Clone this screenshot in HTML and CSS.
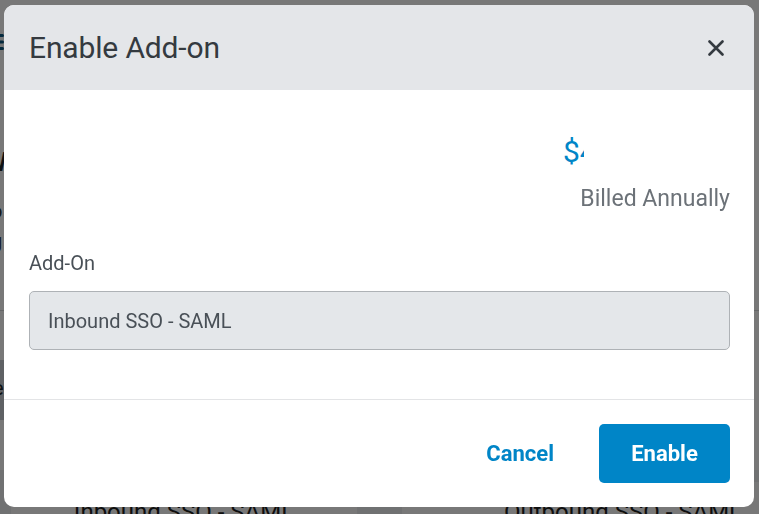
FILE: index.html
```html
<!DOCTYPE html>
<html lang="en">
<head>
<meta charset="utf-8">
<title>Enable Add-on</title>
<link rel="stylesheet" href="styles.css">
</head>
<body>
<div class="page">
  <header class="topbar">
    <svg class="menu-icon" width="22" height="18" viewBox="0 0 22 18" aria-hidden="true">
      <rect x="0" y="1" width="22" height="3" rx="1.5"/>
      <rect x="0" y="7.5" width="22" height="3" rx="1.5"/>
      <rect x="0" y="14" width="22" height="3" rx="1.5"/>
    </svg>
  </header>
  <section class="panel">
    <h1 class="page-title">W</h1>
    <p class="page-text">o</p>
    <p class="page-text">g</p>
    <hr class="page-rule">
    <div class="table-head">e</div>
  </section>
  <section class="cards">
    <div class="card">Inbound SSO - SAML</div>
    <div class="card">Outbound SSO - SAML</div>
  </section>
</div>

<div class="backdrop">
  <div class="modal" role="dialog" aria-labelledby="modal-title">
    <div class="modal-header">
      <h2 class="modal-title" id="modal-title">Enable Add-on</h2>
      <button class="close-btn" type="button" aria-label="Close">
        <svg width="16" height="16" viewBox="0 0 16 16" aria-hidden="true">
          <path d="M1.5 1.5 L14.5 14.5 M14.5 1.5 L1.5 14.5" />
        </svg>
      </button>
    </div>
    <div class="modal-body">
      <div class="price-row"><span class="price">$49.00</span></div>
      <div class="billing">Billed Annually</div>
      <label class="field-label">Add-On</label>
      <div class="field">Inbound SSO - SAML</div>
    </div>
    <div class="modal-footer">
      <button class="btn-link" type="button">Cancel</button>
      <button class="btn-primary" type="button">Enable</button>
    </div>
  </div>
</div>
</body>
</html>
```

FILE: styles.css
```css
* {
  box-sizing: border-box;
}

html, body {
  margin: 0;
  padding: 0;
}

body {
  font-family: Roboto, "Noto Sans", "Liberation Sans", sans-serif;
  background: #eef0f3;
  color: #212529;
  overflow: hidden;
  height: 514px;
}

/* ---------- page behind the dialog ---------- */
.page {
  display: flex;
  flex-direction: column;
}

.topbar {
  height: 80px;
  background: #ffffff;
  padding: 33px 0 0 0;
  margin-left: -18px;
}

.menu-icon {
  display: block;
  fill: #0b5a86;
}

.panel {
  background: #ffffff;
  padding: 67px 0 0 0;
  height: 390px;
}

.page-title {
  margin: 0 0 0 -16px;
  font-size: 26px;
  font-weight: 500;
  line-height: 30px;
}

.page-text {
  margin: 22px 0 0 -9px;
  font-size: 20px;
  line-height: 24px;
  color: #333;
}

.page-text + .page-text {
  margin-top: 6px;
}

.page-rule {
  margin: 57px 0 0 0;
  border: 0;
  border-top: 1px solid #d6d9dc;
}

.table-head {
  margin-top: 49px;
  height: 60px;
  background: #c9ced4;
  font-size: 20px;
  line-height: 56px;
  padding-left: 0;
  margin-left: -7px;
  width: 12px;
}

.cards {
  display: grid;
  grid-template-columns: 346px 442px;
  gap: 45px;
  padding: 12px 0 0 11px;
}

.card {
  background: #ffffff;
  height: 60px;
  font-size: 24px;
  line-height: 60px;
  text-align: center;
  color: #1f1f1f;
}

/* ---------- dialog ---------- */
.backdrop {
  position: fixed;
  inset: 0;
  background: rgba(0, 0, 0, 0.53);
  display: flex;
  align-items: flex-start;
  padding: 5px 0 0 4px;
}

.modal {
  width: 750px;
  height: 502px;
  background: #ffffff;
  border-radius: 10px;
  overflow: hidden;
  display: flex;
  flex-direction: column;
}

.modal-header {
  height: 85px;
  flex: none;
  background: #e4e6e9;
  display: flex;
  align-items: center;
  justify-content: space-between;
  padding: 0 30px 0 25px;
}

.modal-title {
  margin: 0;
  font-size: 30px;
  font-weight: 400;
  line-height: 36px;
  color: #343a40;
  letter-spacing: -0.15px;
}

.close-btn {
  border: 0;
  background: none;
  padding: 0;
  width: 16px;
  height: 16px;
  display: flex;
  cursor: pointer;
}

.close-btn path {
  stroke: #343a40;
  stroke-width: 2.6;
  stroke-linecap: round;
  fill: none;
}

.modal-body {
  flex: 1;
  display: flex;
  flex-direction: column;
  padding: 44px 24px 0 25px;
  border-bottom: 1px solid #e3e4e6;
}

.price-row {
  display: flex;
  justify-content: flex-end;
}

.price {
  display: block;
  width: 21px;
  margin-right: 146px;
  overflow: hidden;
  white-space: nowrap;
  font-size: 30px;
  line-height: 36px;
  font-weight: 400;
  color: #0085c7;
}

.billing {
  margin-top: 16px;
  text-align: right;
  font-size: 23px;
  line-height: 26px;
  color: #6c7278;
}

.field-label {
  display: block;
  margin-top: 39px;
  font-size: 20px;
  line-height: 24px;
  color: #495057;
}

.field {
  margin-top: 16px;
  height: 59px;
  background: #e4e7ea;
  border: 1px solid #aeb2b6;
  border-radius: 5px;
  display: flex;
  align-items: center;
  padding-left: 18px;
  font-size: 20px;
  color: #495057;
}

.modal-footer {
  flex: none;
  height: 107px;
  display: flex;
  align-items: center;
  justify-content: flex-end;
  gap: 23px;
  padding: 0 24px;
}

.btn-link {
  border: 0;
  background: none;
  font-family: inherit;
  font-size: 22px;
  font-weight: 700;
  color: #0085c7;
  padding: 0 22px;
  height: 59px;
  cursor: pointer;
}

.btn-primary {
  border: 0;
  background: #0085c7;
  color: #ffffff;
  font-family: inherit;
  font-size: 22px;
  font-weight: 700;
  height: 59px;
  width: 131px;
  border-radius: 5px;
  cursor: pointer;
}
```
